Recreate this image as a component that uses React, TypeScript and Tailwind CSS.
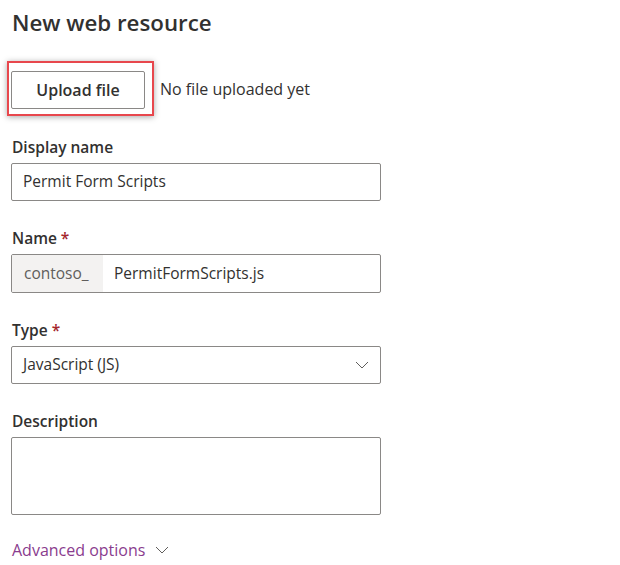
const font = { fontFamily: '"Segoe UI", "Open Sans", sans-serif' };

function Chevron({ className }: { className?: string }) {
  return (
    <svg viewBox="0 0 14 8" width="14" height="8" className={className} fill="none">
      <path d="M1 1l6 6 6-6" stroke="currentColor" strokeWidth="1" />
    </svg>
  );
}

function Label({ text, required }: { text: string; required?: boolean }) {
  return (
    <div className="text-[15.5px] leading-5 font-semibold text-[#323130] mb-1.5">
      {text}
      {required && <span className="text-[#a4262c] ml-1">*</span>}
    </div>
  );
}

export default function App() {
  return (
    <div className="w-[620px] h-[565px] bg-white px-3 pt-[9px] text-[#323130]" style={font}>
      <h1 className="text-[22.3px] leading-7 font-semibold text-[#323130]">New web resource</h1>

      <div className="flex items-center mt-[24px]">
        <div className="-ml-[5px] border-2 border-[#e8474d] pl-[2px] pr-[7px] pt-[8px] pb-[5px] shadow-[0_1px_6px_rgba(0,0,0,0.35)]">
          <button className="w-[134px] h-[38px] border border-[#8a8886] rounded-[2px] bg-white text-[16px] font-semibold text-[#323130]">
            Upload file
          </button>
        </div>
        <span className="ml-[6px] text-[16px] text-[#323130]">No file uploaded yet</span>
      </div>

      <div className="mt-[21px] w-[370px] -ml-px">
        <div className="pl-px">
          <Label text="Display name" />
        </div>
        <div className="h-[38px] border border-[#8a8886] rounded-[2px] flex items-center px-[11px] text-[15.5px]">
          Permit Form Scripts
        </div>

        <div className="pl-px mt-[27px]">
          <Label text="Name" required />
        </div>
        <div className="h-[39px] border border-[#8a8886] rounded-[2px] flex items-stretch text-[15.5px] overflow-hidden">
          <div className="w-[91px] bg-[#f3f2f1] flex items-center pl-[12px] text-[#605e5c]">contoso_</div>
          <div className="flex items-center pl-[11px]">PermitFormScripts.js</div>
        </div>

        <div className="pl-px mt-[27px]">
          <Label text="Type" required />
        </div>
        <div className="h-[38px] border border-[#8a8886] rounded-[2px] flex items-center justify-between pl-[11px] pr-[11px] text-[15.5px]">
          <span>JavaScript (JS)</span>
          <Chevron className="text-[#605e5c]" />
        </div>

        <div className="pl-px mt-[27px]">
          <Label text="Description" />
        </div>
        <div className="h-[78px] border border-[#8a8886] rounded-[2px]" />

        <div className="pl-px mt-[25px] flex items-center gap-[10px] text-[16px] leading-5">
          <span className="text-[#8a3c8e]">Advanced options</span>
          <Chevron className="text-[#605e5c]" />
        </div>
      </div>
    </div>
  );
}
